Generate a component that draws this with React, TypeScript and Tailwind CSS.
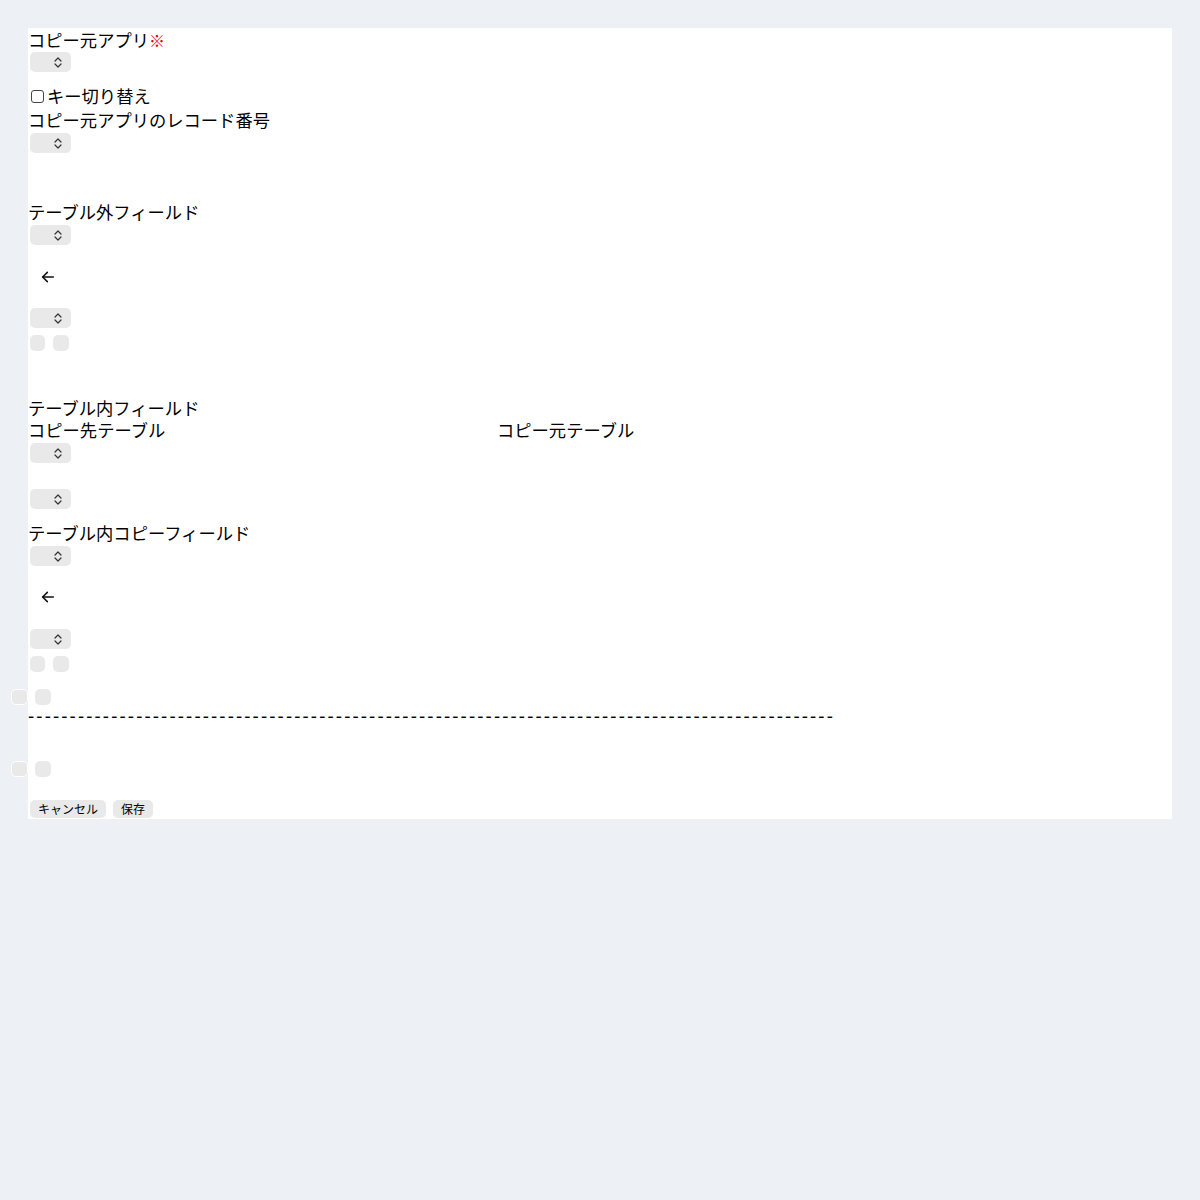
import React from 'react';

const jp = { fontFamily: '"Noto Sans CJK JP", "Noto Sans", sans-serif' };

function SelectBox({ className = '' }: { className?: string }) {
  return (
    <div className={`ml-[2px] flex h-[20px] w-[41px] items-center justify-end rounded-[5px] bg-[#e9e9e9] pr-[9px] ${className}`}>
      <svg width="8" height="11" viewBox="0 0 8 11" fill="none" stroke="#333" strokeWidth="1.2" strokeLinecap="round" strokeLinejoin="round">
        <path d="M1 4l3-3 3 3" />
        <path d="M1 7l3 3 3-3" />
      </svg>
    </div>
  );
}

function SmallButtons({ className = '', outside = false }: { className?: string; outside?: boolean }) {
  return (
    <div className={`flex h-[16px] items-center ${outside ? '-ml-[17px] gap-[7px]' : 'ml-[2px] gap-[8px]'} ${className}`}>
      <button className={`h-[16px] rounded-[5px] bg-[#e9e9e9] ${outside ? 'w-[17px] border border-white' : 'w-[15px]'}`} />
      <button className="h-[16px] w-[16px] rounded-[5px] bg-[#e9e9e9]" />
    </div>
  );
}

function ArrowRow({ className = '' }: { className?: string }) {
  return (
    <div className={`flex h-6 items-center pl-[12px] ${className}`}>
      <svg width="16" height="16" viewBox="0 0 24 24" fill="none" stroke="#111" strokeWidth="2.3" strokeLinecap="round" strokeLinejoin="round">
        <path d="M20 12H4" />
        <path d="M11 19l-7-7 7-7" />
      </svg>
    </div>
  );
}

export default function App() {
  return (
    <div className="min-h-[1200px] bg-[#edf0f5] px-[28px] pt-[28px]" style={jp}>
      <div className="flex flex-col items-start bg-white pb-[1px] text-[17.3px] leading-6 text-black">
        <div className="flex h-6 items-center">
          コピー元アプリ<span className="text-[16px] font-bold leading-none text-[#f00000]">※</span>
        </div>
        <SelectBox />

        <label className="mt-3 flex h-6 items-center">
          <input type="checkbox" className="ml-[3px] mr-[3px] h-[13px] w-[13px] appearance-none rounded-[3px] border border-[#444] bg-white" />
          キー切り替え
        </label>
        <div>コピー元アプリのレコード番号</div>
        <SelectBox className="mt-[1px]" />

        <div className="mt-[47px]">テーブル外フィールド</div>
        <SelectBox className="mt-[1px]" />
        <ArrowRow className="mt-[20px]" />
        <SelectBox className="mt-[19px]" />
        <SmallButtons className="mt-[7px]" />

        <div className="mt-[46px] leading-[21px]">テーブル内フィールド</div>
        <div className="flex w-full">
          <div className="w-[469px]">コピー先テーブル</div>
          <div>コピー元テーブル</div>
        </div>
        <SelectBox className="mt-[1px]" />
        <SelectBox className="mt-[26px]" />

        <div className="mt-[12px]">テーブル内コピーフィールド</div>
        <SelectBox className="mt-[1px]" />
        <ArrowRow className="mt-[19px]" />
        <SelectBox className="mt-[20px]" />
        <SmallButtons className="mt-[7px]" />

        <SmallButtons className="mt-[17px]" outside />
        <div className="-mt-[2px] whitespace-nowrap font-medium tracking-[2.15px]">{'-'.repeat(97)}</div>
        <SmallButtons className="mt-[34px]" outside />

        <div className="ml-[2px] mt-[23px] flex gap-[7px] text-[12px] leading-[18px]">
          <button className="h-[18px] rounded-[5px] bg-[#e9e9e9] px-[8px]">キャンセル</button>
          <button className="h-[18px] rounded-[5px] bg-[#e9e9e9] px-[8px]">保存</button>
        </div>
      </div>
    </div>
  );
}
